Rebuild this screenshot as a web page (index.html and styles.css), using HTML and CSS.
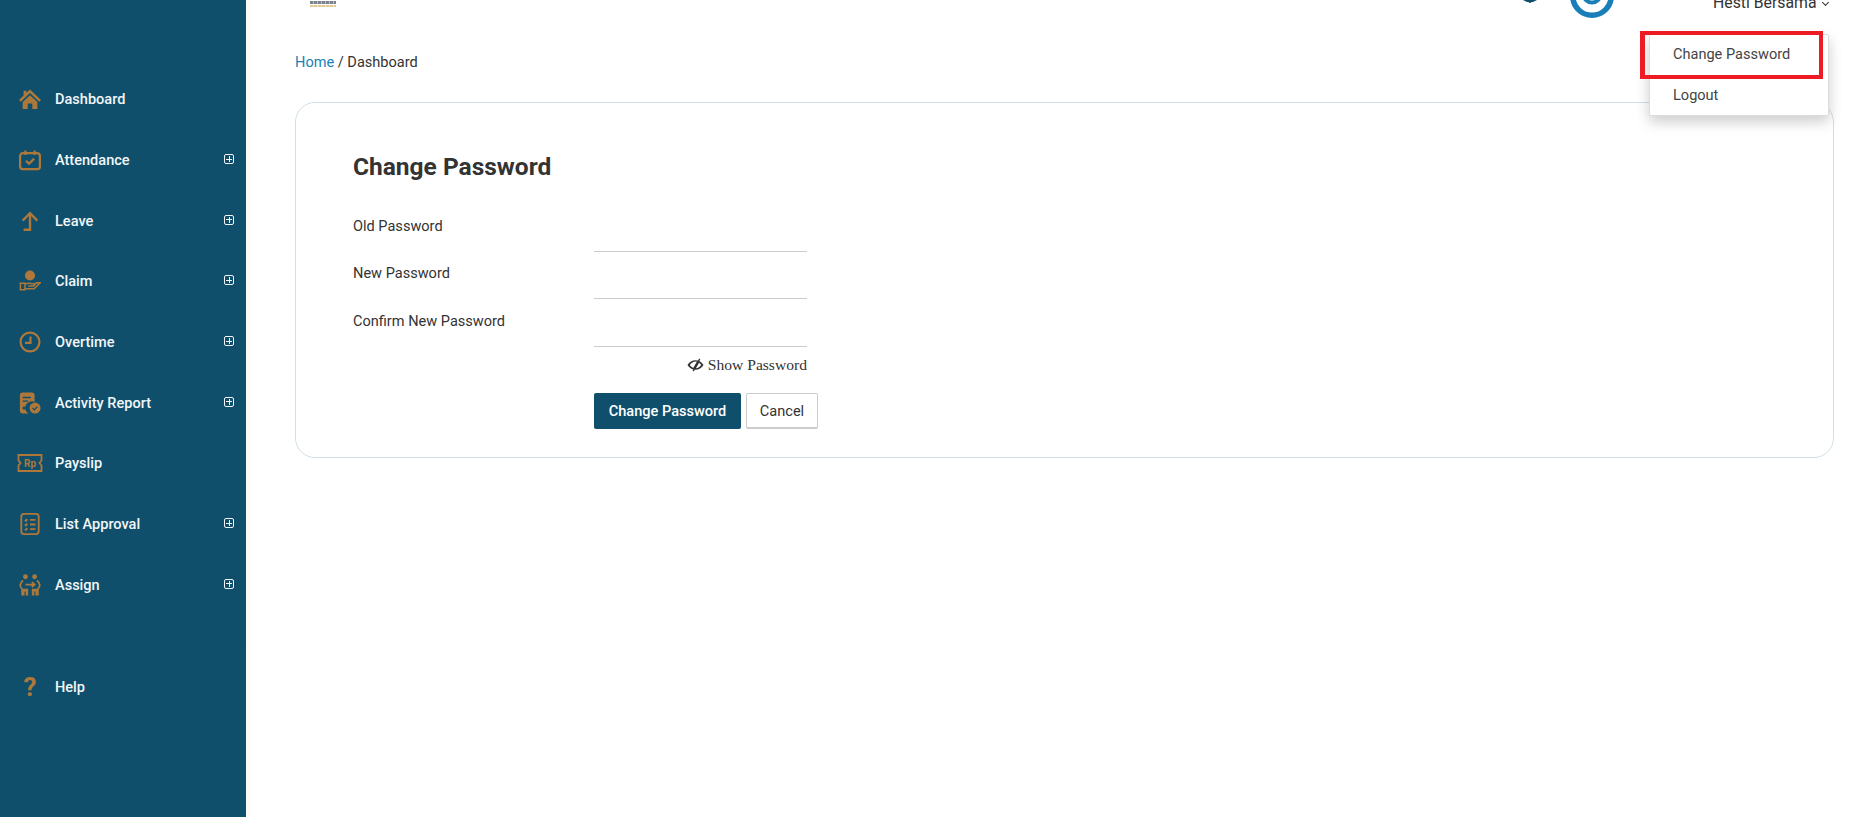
FILE: index.html
```html
<!DOCTYPE html>
<html lang="en">
<head>
    <meta charset="UTF-8">
    <meta name="viewport" content="width=device-width, initial-scale=1.0">
    <title>Change Password</title>
    <link rel="stylesheet" href="styles.css">
</head>
<body>
    <aside class="sidebar">
        <nav class="menu">
            <a class="menu-item">
                <svg class="menu-icon" viewBox="0 0 24 24"><path fill="#ae783b" d="M12 1.500 L24 13 L22 15 L12 5.500 L2 15 L0 13 L5 8.200 V3 H8 V5.300Z M12 7.800 L20 15.300 V23 H14.500 V17 H9.500 V23 H4 V15.300Z"/></svg>
                <span class="menu-label">Dashboard</span>
            </a>
            <a class="menu-item">
                <svg class="menu-icon" viewBox="0 0 24 24" fill="none" stroke="#ae783b" stroke-width="2.400"><rect x="1.200" y="4.500" width="21.600" height="17.500" rx="3"/><path d="M7 1.500v5M17 1.500v5M7.500 13l3.500 3 5.500-5.500"/></svg>
                <span class="menu-label">Attendance</span>
                <span class="menu-plus"></span>
            </a>
            <a class="menu-item">
                <svg class="menu-icon" viewBox="0 0 24 24" fill="none" stroke="#ae783b" stroke-width="2.600"><path d="M4 11.500 L12 3.500 L20 11.500M12 3.500 V21.500 H5"/></svg>
                <span class="menu-label">Leave</span>
                <span class="menu-plus"></span>
            </a>
            <a class="menu-item">
                <svg class="menu-icon" viewBox="0 0 24 24"><circle cx="12" cy="6" r="5.500" fill="#ae783b"/><path fill="none" stroke="#ae783b" stroke-width="1.600" d="M1.500 14.500h5v7h-5zM6.500 15.500c3-1.500 5-1.500 8-.5h3.500l-2 2.500h-6M6.500 20.500h10l6.500-6.500h-5"/></svg>
                <span class="menu-label">Claim</span>
                <span class="menu-plus"></span>
            </a>
            <a class="menu-item">
                <svg class="menu-icon" viewBox="0 0 24 24" fill="none" stroke="#ae783b" stroke-width="2.400"><circle cx="12" cy="12" r="10.300"/><path d="M12.500 6V13H6.500"/></svg>
                <span class="menu-label">Overtime</span>
                <span class="menu-plus"></span>
            </a>
            <a class="menu-item">
                <svg class="menu-icon" viewBox="0 0 24 24"><path fill="#ae783b" d="M4 .500h10a3 3 0 0 1 3 3V11a6.500 6.500 0 0 0-6.500 12.500H4a3 3 0 0 1-3-3V3.500a3 3 0 0 1 3-3z"/><path stroke="#0f4f6c" stroke-width="1.500" d="M4 6h9M4 10h6"/><rect x="4" y="16" width="3" height="3" fill="#0f4f6c"/><circle cx="17.500" cy="17.500" r="6" fill="#ae783b"/><path fill="none" stroke="#0f4f6c" stroke-width="1.400" d="M14.800 17.500l2 2 3.200-3.500"/></svg>
                <span class="menu-label">Activity Report</span>
                <span class="menu-plus"></span>
            </a>
            <a class="menu-item">
                <svg class="menu-icon wide" viewBox="0 0 26 18" fill="none" stroke="#ae783b" stroke-width="1.800"><path d="M1.500 1h23v5.500l-2 2.500 2 2.500V17h-23v-5.500l2-2.500-2-2.500z"/><text x="13" y="13" class="rp-text">Rp</text></svg>
                <span class="menu-label">Payslip</span>
            </a>
            <a class="menu-item">
                <svg class="menu-icon" viewBox="0 0 24 24" fill="none" stroke="#ae783b" stroke-width="2"><rect x="2.500" y="1" width="19" height="22" rx="3"/><path d="M6.500 7.500l1 1 1.500-2M12 7.500h6M6.500 12.500l1 1 1.500-2M12 12.500h6M6.500 17.500l1 1 1.500-2M12 17.500h6"/></svg>
                <span class="menu-label">List Approval</span>
                <span class="menu-plus"></span>
            </a>
            <a class="menu-item">
                <svg class="menu-icon" viewBox="0 0 24 24"><circle cx="7" cy="3" r="2.600" fill="#ae783b"/><circle cx="17" cy="3" r="2.600" fill="#ae783b"/><path fill="none" stroke="#ae783b" stroke-width="2" d="M4.500 7c-4 3-4 7-1 9.500M19.500 7c4 3 4 7 1 9.500M7 11.500h9M14 8.800l3 2.700-3 2.700"/><path fill="#ae783b" d="M2.500 16h7.500v7.500H7.200v-4.500H6v4.500H2.500zM14 16h7.500v7.500H18v-4.500h-1.200v4.500H14z"/></svg>
                <span class="menu-label">Assign</span>
                <span class="menu-plus"></span>
            </a>
        </nav>
        <a class="menu-item">
            <span class="menu-icon help-mark">?</span>
            <span class="menu-label">Help</span>
        </a>
    </aside>

    <div class="main">
        <header class="topbar">
            <div class="logo"><span class="logo-top"></span><span class="logo-bottom"></span></div>
            <svg class="bell" viewBox="0 0 14 4"><path fill="#0f4f6c" d="M0 0h14L10 2H8.500A1.700 1.700 0 0 1 5.500 2H4z"/></svg>
            <svg class="avatar" viewBox="0 0 44 44" fill="none" stroke="#1a7fb8"><circle cx="22" cy="22" r="19.250" stroke-width="5.500"/><circle cx="22" cy="20" r="8.500" stroke-width="4"/></svg>
            <div class="user">Hesti Bersama<span class="chevron"></span></div>
        </header>

        <div class="crumb"><a class="crumb-link">Home</a> / Dashboard</div>

        <section class="card">
            <h1 class="card-title">Change Password</h1>
            <div class="field">
                <label class="field-label">Old Password</label>
                <input class="field-input" type="password">
            </div>
            <div class="field">
                <label class="field-label">New Password</label>
                <input class="field-input" type="password">
            </div>
            <div class="field">
                <label class="field-label">Confirm New Password</label>
                <input class="field-input" type="password">
            </div>
            <div class="show-row">
                <div class="show-pass">
                    <svg class="eye" viewBox="0 0 18 14"><path fill="#333" d="M.500 7c2-3.200 5-5 8.500-5s6.500 1.800 8.500 5c-2 3.200-5 5-8.500 5S2.500 10.200.500 7zm2.500 0c1 1.500 2.300 2.500 3.800 3L10.400 3.500C7.500 3 4.800 4.600 3 7zm9.700-2.500-3.300 6c2.300-.2 4.300-1.400 5.600-3.500-.6-1-1.400-1.900-2.300-2.500z"/><path stroke="#333" stroke-width="1.400" d="M13.500.500 6.500 13.500"/></svg>
                    Show Password
                </div>
            </div>
            <div class="actions">
                <button class="btn btn-primary">Change Password</button>
                <button class="btn btn-cancel">Cancel</button>
            </div>
        </section>
    </div>

    <div class="dropdown">
        <a class="dropdown-item">Change Password</a>
        <a class="dropdown-item">Logout</a>
    </div>
    <div class="highlight"></div>
</body>
</html>
```

FILE: styles.css
```css
* {
    margin: 0;
    padding: 0;
    box-sizing: border-box;
}

html, body {
    height: 100%;
    overflow: hidden;
}

body {
    display: flex;
    font-family: Roboto, "Liberation Sans", sans-serif;
    font-size: 14.56px;
    color: #333;
    background-color: #fff;
}

.sidebar {
    width: 246px;
    flex-shrink: 0;
    background-color: #0f4f6c;
    padding-top: 69px;
    color: #f2f6f8;
    box-shadow: 2px 0 6px rgba(0, 0, 0, 0.04);
}

.menu {
    padding-bottom: 27px;
    border-bottom: 1px solid #0e4c68;
    margin-bottom: 13px;
}

.menu-item {
    display: flex;
    align-items: center;
    height: 60.7px;
    padding-left: 19px;
    font-weight: 500;
}

.menu-icon {
    width: 22px;
    height: 22px;
    flex-shrink: 0;
}

.menu-icon.wide {
    width: 26px;
    height: 18px;
    margin-left: -2px;
    margin-right: -2px;
}

.rp-text {
    fill: #ae783b;
    stroke: none;
    font-family: Roboto, sans-serif;
    font-size: 10px;
    font-weight: 700;
    text-anchor: middle;
}

.menu-label {
    margin-left: 14px;
    flex: 1;
}

.menu-plus {
    width: 10px;
    height: 10px;
    margin-right: 12px;
    margin-bottom: 2px;
    border: 1px solid #f2f6f8;
    border-radius: 2px;
    background:
        linear-gradient(#f2f6f8, #f2f6f8) center / 6px 1px no-repeat,
        linear-gradient(#f2f6f8, #f2f6f8) center / 1px 6px no-repeat;
}

.help-mark {
    color: #ae783b;
    font-size: 26px;
    font-weight: 700;
    text-align: center;
    line-height: 22px;
}

.main {
    flex: 1;
    min-width: 0;
    padding: 0 30px 0 49px;
}

.topbar {
    display: flex;
    align-items: flex-end;
    height: 20px;
    overflow: hidden;
}

.logo {
    width: 26px;
    margin-left: 15px;
    margin-bottom: 13px;
    display: flex;
    flex-direction: column;
    gap: 1px;
}

.logo-top {
    height: 3px;
    background: repeating-linear-gradient(90deg, #7d838d 0 3px, #b4b8bf 3px 4px);
}

.logo-bottom {
    height: 2px;
    background: repeating-linear-gradient(90deg, #dfca96 0 3px, #efe4c6 3px 4px);
}

.bell {
    width: 14px;
    height: 4px;
    margin-left: auto;
    margin-right: 33px;
    margin-bottom: 16px;
}

.avatar {
    width: 44px;
    height: 44px;
    margin-right: 99px;
    margin-bottom: 2px;
}

.user {
    width: 115px;
    margin-right: 6px;
    margin-bottom: 9px;
    font-size: 15.8px;
    line-height: 16px;
    white-space: nowrap;
}

.chevron {
    display: inline-block;
    width: 5px;
    height: 5px;
    margin-left: 6px;
    border-right: 1px solid #333;
    border-bottom: 1px solid #333;
    transform: translateY(-3px) rotate(45deg);
}

.crumb {
    margin-top: 34px;
    line-height: 16px;
}

.crumb-link {
    color: #1a7fb8;
}

.card {
    margin-top: 32px;
    height: 356px;
    padding: 48px 57px;
    border: 1px solid #cfe0e6;
    border-radius: 20px;
}

.card-title {
    font-size: 24.5px;
    font-weight: 700;
    line-height: 32px;
    margin-bottom: 28.6px;
}

.field {
    display: flex;
    height: 47.5px;
}

.field-label {
    width: 241px;
    padding-top: 4px;
    line-height: 20px;
}

.field-input {
    width: 213px;
    height: 40px;
    border: none;
    border-bottom: 1px solid #ccc;
    outline: none;
    background: transparent;
}

.show-row {
    width: 454px;
    display: flex;
    justify-content: flex-end;
    margin-top: 2.4px;
}

.show-pass {
    display: flex;
    align-items: center;
    gap: 4px;
    font-family: "Liberation Serif", serif;
    font-size: 15.6px;
    line-height: 18px;
}

.eye {
    width: 17px;
    height: 14px;
}

.actions {
    display: flex;
    gap: 5px;
    margin-top: 19px;
    margin-left: 241px;
}

.btn {
    height: 36px;
    font-family: Roboto, sans-serif;
    font-size: 14.56px;
    border-radius: 2px;
    cursor: pointer;
}

.btn-primary {
    width: 147px;
    background-color: #0f4f6c;
    color: #fff;
    font-weight: 500;
    border: none;
}

.btn-cancel {
    width: 72px;
    background-color: #fff;
    color: #333;
    border: 1px solid #ccc;
    border-bottom-width: 2px;
}

.dropdown {
    position: absolute;
    left: 1649px;
    top: 34px;
    width: 180px;
    height: 82px;
    background-color: #fff;
    border: 1px solid #ddd;
    border-radius: 2px;
    box-shadow: 0 6px 14px rgba(0, 0, 0, 0.2);
    color: #444;
}

.dropdown-item {
    display: block;
    height: 40.5px;
    padding-left: 23px;
    line-height: 38px;
}

.highlight {
    position: absolute;
    left: 1640px;
    top: 31px;
    width: 183px;
    height: 48px;
    border: 4px solid #ed1c24;
    border-left-width: 5px;
}
```
